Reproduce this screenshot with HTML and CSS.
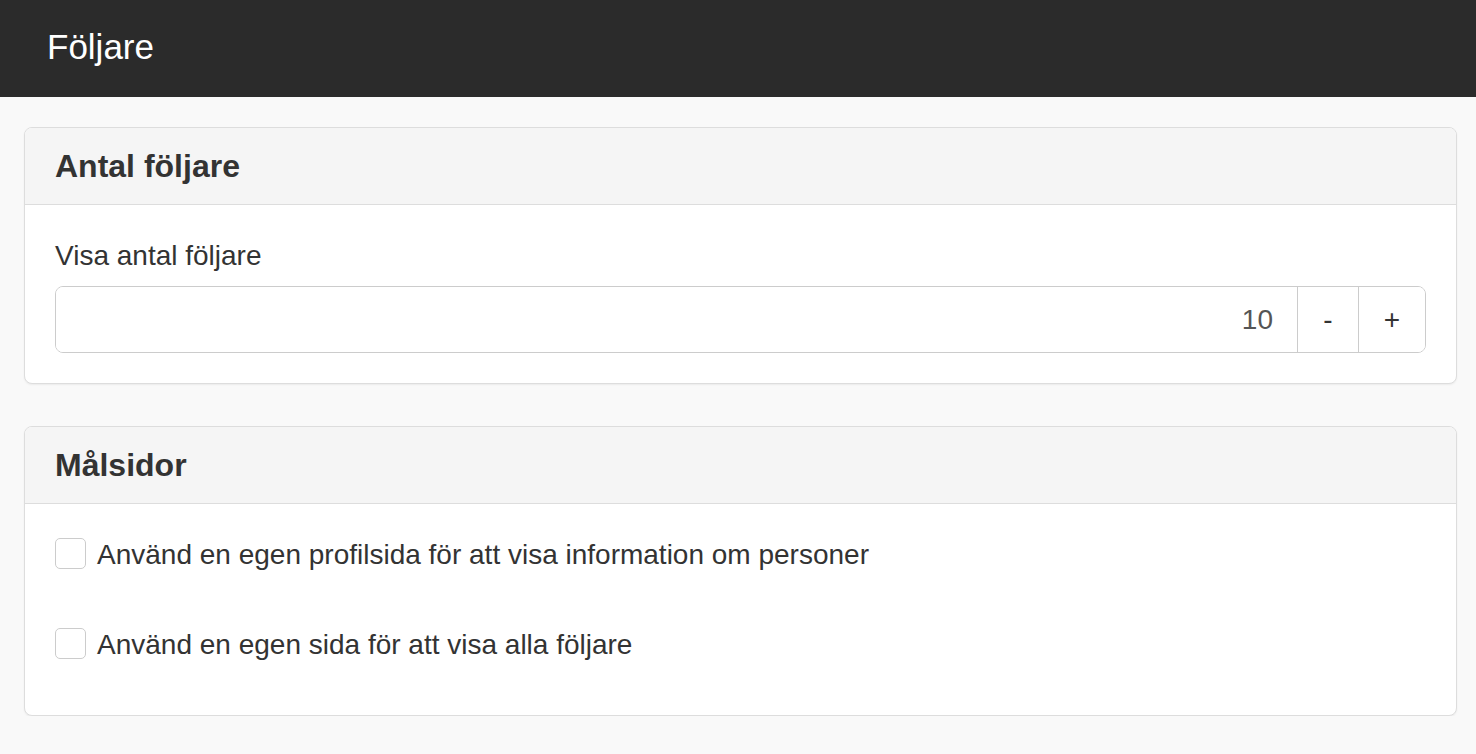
FILE: index.html
```html
<!DOCTYPE html>
<html lang="sv">
<head>
    <meta charset="UTF-8">
    <meta name="viewport" content="width=device-width, initial-scale=1.0">
    <title>Följare</title>
    <link rel="stylesheet" href="styles.css">
</head>
<body>
    <div class="topbar">
        <h1>Följare</h1>
    </div>

    <div class="content">
        <div class="panel">
            <div class="panel-heading">Antal följare</div>
            <div class="panel-body">
                <label class="field-label" for="count">Visa antal följare</label>
                <div class="input-group">
                    <input type="text" id="count" value="10">
                    <button type="button" class="btn-minus">-</button>
                    <button type="button" class="btn-plus">+</button>
                </div>
            </div>
        </div>

        <div class="panel">
            <div class="panel-heading">Målsidor</div>
            <div class="panel-body checks">
                <label class="check">
                    <input type="checkbox">
                    <span>Använd en egen profilsida för att visa information om personer</span>
                </label>
                <label class="check">
                    <input type="checkbox">
                    <span>Använd en egen sida för att visa alla följare</span>
                </label>
            </div>
        </div>
    </div>
</body>
</html>
```

FILE: styles.css
```css
* {
    margin: 0;
    padding: 0;
    box-sizing: border-box;
}

body {
    background-color: #f9f9f9;
    font-family: "Liberation Sans", Arial, sans-serif;
    color: #333;
}

.topbar {
    height: 97px;
    background-color: #2b2b2b;
    display: flex;
    align-items: center;
    padding-left: 47px;
}

.topbar h1 {
    color: #fff;
    font-size: 35px;
    font-weight: normal;
    line-height: 40px;
    margin-top: -4px;
}

.content {
    padding: 30px 19px 0 24px;
    display: flex;
    flex-direction: column;
    gap: 42px;
}

.panel {
    background-color: #fff;
    border: 1px solid #ddd;
    border-radius: 8px;
    box-shadow: 0 1px 2px rgba(0, 0, 0, 0.06);
    overflow: hidden;
}

.panel-heading {
    height: 77px;
    background-color: #f5f5f5;
    border-bottom: 1px solid #ddd;
    padding: 0 30px;
    display: flex;
    align-items: center;
    font-size: 32px;
    font-weight: bold;
}

.panel-body {
    padding: 31px 30px 30px 30px;
}

.field-label {
    display: block;
    font-size: 28px;
    line-height: 40px;
    margin-bottom: 10px;
}

.input-group {
    display: flex;
    height: 67px;
    border: 1px solid #ccc;
    border-radius: 8px;
    overflow: hidden;
}

.input-group input {
    flex: 1;
    border: none;
    outline: none;
    text-align: right;
    padding-right: 24px;
    font-size: 28px;
    font-family: "Liberation Sans", Arial, sans-serif;
    color: #555;
    background: #fff;
}

.input-group button {
    border: none;
    border-left: 1px solid #ccc;
    background: #fff;
    font-size: 28px;
    font-family: "Liberation Sans", Arial, sans-serif;
    color: #333;
    cursor: pointer;
}

.btn-minus {
    width: 61px;
}

.btn-plus {
    width: 67px;
}

.checks {
    display: flex;
    flex-direction: column;
    gap: 50px;
    padding-bottom: 50px;
}

.check {
    display: flex;
    align-items: center;
    height: 40px;
    font-size: 28px;
    cursor: pointer;
}

.check input {
    appearance: none;
    -webkit-appearance: none;
    width: 31px;
    height: 31px;
    border: 1px solid #ccc;
    border-radius: 5px;
    background: #fff;
    margin-right: 11px;
    margin-top: -3px;
}
```
